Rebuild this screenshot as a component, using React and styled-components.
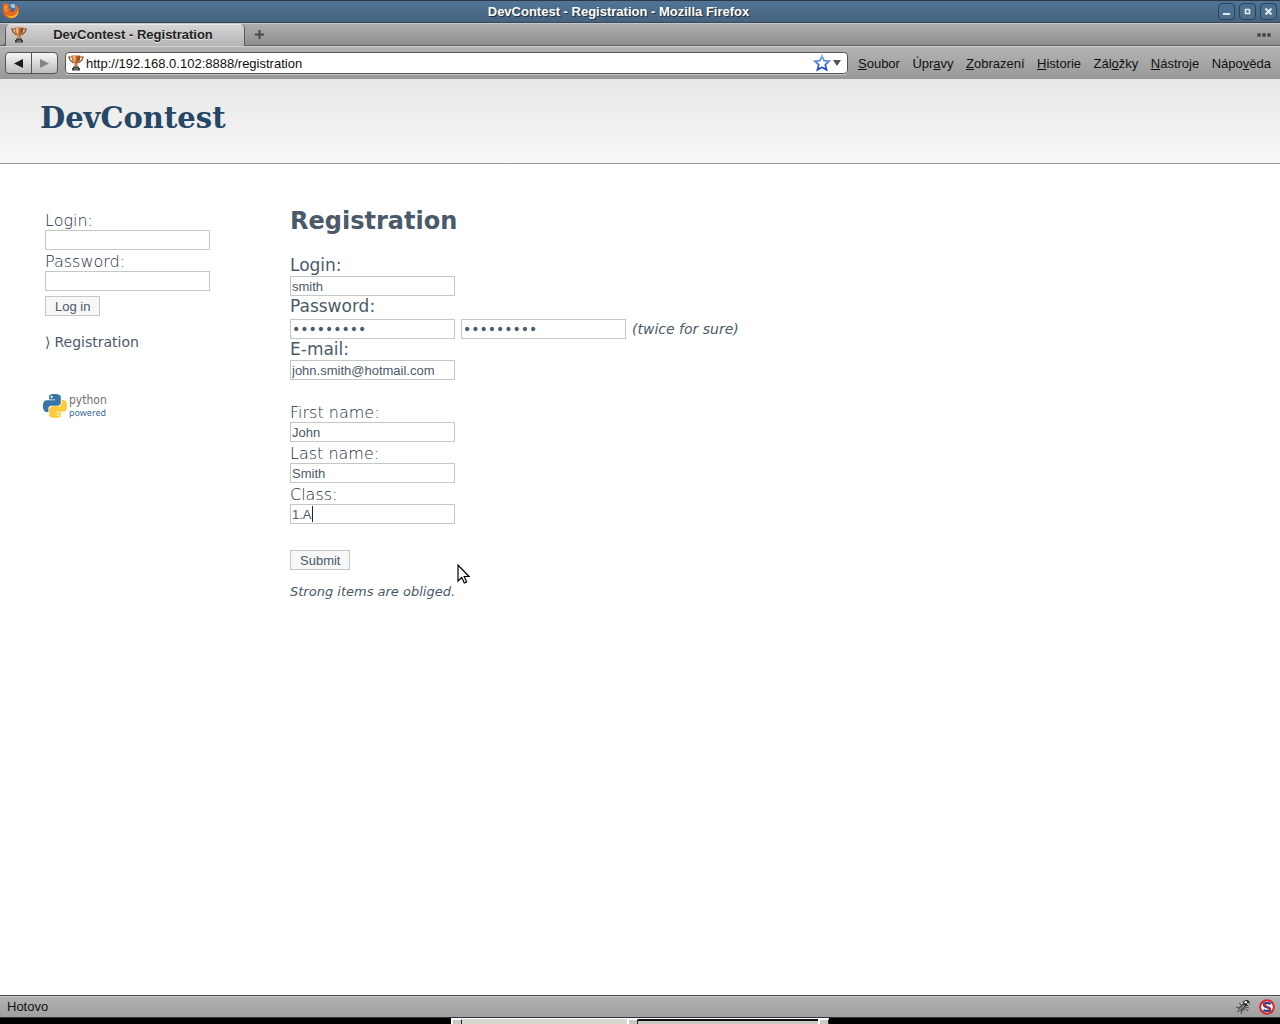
import React from 'react';
import styled, { createGlobalStyle, css } from 'styled-components';

const ui = '"Liberation Sans", Arial, sans-serif';
const body = '"DejaVu Sans", Verdana, sans-serif';
const ink = '#4a5a6a';

const GlobalStyle = createGlobalStyle`
  * { box-sizing: border-box; }
  body { margin: 0; background: #fff; }
  button, input { font: inherit; color: inherit; }
`;

const Window = styled.div`
  display: flex;
  flex-direction: column;
  min-height: 100vh;
  font: 13px/16px ${ui};
  color: #111;
`;

const TitleBar = styled.div`
  display: grid;
  grid-template-columns: 60px 1fr 60px;
  align-items: center;
  height: 23px;
  padding: 0 3px 0 2px;
  border-top: 1px solid #2c3540;
  border-bottom: 1px solid #34495c;
  background: linear-gradient(#4f7597, #46637e);
`;

const WindowTitle = styled.div`
  padding-right: 42px;
  text-align: center;
  font-weight: bold;
  color: #fff;
  text-shadow: 1px 1px 1px #1d2a36;
`;

const WindowButtons = styled.div`
  display: flex;
  justify-content: flex-end;
  gap: 4px;
`;

const WindowButton = styled.button`
  display: grid;
  place-items: center;
  width: 17px;
  height: 17px;
  padding: 0;
  border: 1px solid #2b4259;
  border-radius: 4px;
  background: #4c6f8f;
`;

const TabBar = styled.div`
  display: flex;
  height: 23px;
  border-top: 1px solid #c6c6c6;
  border-bottom: 1px solid #606060;
  background: linear-gradient(#adadad, #8f8f8f);
`;

const TabStub = styled.div`
  width: 5px;
  height: 22px;
  border-bottom: 1px solid #606060;
  border-radius: 0 0 4px 0;
  background: #a2a2a2;
`;

const Tab = styled.div`
  display: flex;
  align-items: center;
  width: 240px;
  height: 22px;
  padding: 0 5px;
  border: solid #5c5c5c;
  border-width: 0 1px;
  border-radius: 5px 5px 0 0;
  background: linear-gradient(#d6d6d6, #b4b4b4);
  box-shadow: inset 0 1px #e6e6e6;
`;

const TabTitle = styled.div`
  flex: 1;
  text-align: center;
  font-weight: bold;
  color: #222;
  text-shadow: 0 1px #e8e8e8;
`;

const PlainButton = styled.button`
  display: grid;
  place-items: center;
  width: 28px;
  padding: 0;
  border: 0;
  background: none;
`;

const Spacer = styled.div`
  flex: 1;
`;

const Toolbar = styled.div`
  display: flex;
  align-items: center;
  height: 33px;
  padding: 0 9px 0 5px;
  border-top: 1px solid #d0d0d0;
  background: linear-gradient(#b4b4b4, #989898);
`;

const HistoryButtons = styled.div`
  display: flex;
  height: 22px;
  margin-right: 7px;
  border: 1px solid #555;
  border-radius: 4px;
  overflow: hidden;
  background: linear-gradient(#f6f6f6, #bcbcbc);
`;

const HistoryButton = styled.button`
  display: grid;
  place-items: center;
  width: ${(p) => (p.$last ? 25 : 26)}px;
  padding: 0;
  border: solid #555;
  border-width: 0 ${(p) => (p.$last ? 0 : 1)}px 0 0;
  background: none;
`;

const AddressBar = styled.form`
  display: flex;
  align-items: center;
  flex: 1;
  height: 22px;
  margin-right: 10px;
  padding: 0 5px 0 2px;
  border: 1px solid #555;
  border-radius: 4px;
  background: #fff;
  box-shadow: 0 1px #c6c6c6;
`;

const AddressInput = styled.input`
  flex: 1;
  min-width: 0;
  height: 18px;
  padding: 0 2px;
  border: 0;
  outline: 0;
  background: none;
`;

const AddressButton = styled.button`
  display: grid;
  place-items: center;
  padding: 0;
  border: 0;
  background: none;
`;

const MenuBar = styled.nav`
  display: flex;
  justify-content: space-between;
  width: 413px;
`;

const MenuItem = styled.button`
  padding: 1px 0 0;
  border: 0;
  background: none;
  color: #111;
`;

const Page = styled.div`
  display: flex;
  flex-direction: column;
  flex: 1;
  background: #fff;
  color: ${ink};
  font: 16px/20px ${body};
`;

const Header = styled.header`
  height: 85px;
  padding: 18px 40px 0;
  border-bottom: 1px solid #999;
  background: linear-gradient(#e8e8e8, #f7f7f7);
`;

const SiteName = styled.a`
  font: bold 29px/42px "DejaVu Serif", Georgia, serif;
  color: #264866;
  text-decoration: none;
`;

const Columns = styled.div`
  display: grid;
  grid-template-columns: 245px 1fr;
  padding: 45px;
`;

const Main = styled.main`
  position: relative;
`;

const Heading = styled.h1`
  margin: -2px 0 20px;
  font-size: 24px;
  line-height: 28px;
`;

const Form = styled.form`
  display: flex;
  flex-direction: column;
  align-items: flex-start;
`;

const FieldGroup = styled.div`
  display: flex;
  flex-direction: column;
  align-items: flex-start;
  margin-bottom: ${(p) => p.$after || 0}px;
`;

const Label = styled.label`
  padding: ${(p) => (p.$strong ? '1px 0 2px' : '3px 0 0')};
  font-size: ${(p) => (p.$strong ? 17 : 16)}px;
  line-height: 18px;
  font-weight: ${(p) => (p.$strong ? 400 : 200)};
  color: ${(p) => (p.$strong ? ink : '#1c2f44')};
`;

const FieldRow = styled.div`
  position: relative;
  display: flex;
  align-items: center;
  gap: 6px;
  padding-top: ${(p) => p.$above || 0}px;
`;

const control = css`
  height: 20px;
  border: 1px solid #c0c8c8;
  border-radius: 0;
  font: 13px/16px ${ui};
  color: ${ink};
`;

const Input = styled.input`
  ${control}
  width: 165px;
  padding: 0 1px;
  outline: 0;
  background: #fff;

  &[type='password'] {
    font: 14px/16px ${body};
  }
`;

const Button = styled.button`
  ${control}
  margin: ${(p) => p.$above || 0}px 0 0;
  padding: 1px 9px 0;
  background: #f7f7f7;
`;

const Caret = styled.span`
  position: absolute;
  left: 22px;
  top: 2px;
  width: 1px;
  height: 16px;
  background: #223;
`;

const Note = styled.em`
  font-size: ${(p) => (p.$inline ? 14 : 13)}px;
`;

const SideLink = styled.a`
  display: flex;
  gap: 4px;
  margin: 16px 0 40px;
  font-size: 14px;
  color: ${ink};
  text-decoration: none;
`;

const Pointer = styled.svg`
  position: absolute;
  left: 167px;
  top: 355px;
`;

const StatusBar = styled.footer`
  display: flex;
  align-items: center;
  gap: 8px;
  height: 22px;
  padding: 0 5px 0 7px;
  border-top: 1px solid #444;
  background: linear-gradient(#b2b2b2, #a0a0a0);
  box-shadow: inset 0 1px #ccc;
`;

const Desktop = styled.div`
  display: flex;
  justify-content: center;
  height: 7px;
  border-top: 1px solid #2c3038;
  background: #000;
`;

const Taskbar = styled.div`
  display: flex;
  width: 378px;
  border-top: 1px solid #fff;
  background: #d8d8d2;
`;

const TaskGrip = styled.div`
  width: 11px;
  border: solid #fff;
  border-width: 1px 0 0 2px;
  border-right: 1px solid #222;
  background: #c8c8c4;
`;

const TaskSlot = styled.div`
  flex: ${(p) => p.$grow};
  border-top: ${(p) => (p.$sunken ? '2px solid #111' : 0)};
  background: ${(p) => (p.$sunken ? '#c6cac2' : 'none')};
`;

const Trophy = () => (
  <svg width="16" height="16" viewBox="0 0 16 16" aria-hidden="true">
    <path d="M4 2H.8L2 5l3.500 3M12 2h3.200L14 5l-3.500 3" fill="none" stroke="#8a4a1c" strokeWidth="1.200" />
    <path d="M3.500.5h9L12 5 9.500 8.500v3h-3v-3L4 5z" fill="#b9652a" />
    <path d="M4.500 1h3.300L7.300 8 5 5z" fill="#f0ae72" />
    <path d="M10.500 1.500H12L11 5 9.500 7z" fill="#7c3f17" />
    <path d="M7.300 8.500h1v3h-1z" fill="#e59a5b" />
    <path d="M5 11.500h6v1.500h1v2.500H4V13h1z" fill="#39423c" />
    <path d="M6 13.500h4v1H6z" fill="#8c948c" />
  </svg>
);

const Firefox = () => (
  <svg width="18" height="20" viewBox="0 1 18 20" aria-hidden="true">
    <circle cx="9.500" cy="8" r="6.500" fill="#2a67b4" />
    <path d="M8 3.500l4-1 2 3-2 2-3-1z" fill="#8cc9ef" />
    <path d="M1 4l1-2.500 2 1.500 2.500-.5L8 4.500 6.500 7l3 1-1.500 2c2 1.500 5 .5 5.500-3L12.500 3c3 1.500 4.500 4 4 7.500C16 15 12.500 17.500 9 17.500 4 17.500 1 13.500 1 9z" fill="#e8681a" />
    <path d="M14 3.500c3 3 2.500 8-1 10.500-3 2-7 1.500-9-1 2 4.500 9 5 11.500.5C17 10.500 16.500 6 14 3.500z" fill="#fbc02b" />
    <path d="M2 6l2.500-2L6 5 4.500 7.500 6 10.500 3.500 10z" fill="#f7a02c" />
  </svg>
);

const Python = () => (
  <svg width="66" height="30" viewBox="2 0 66 30" role="img" aria-label="python powered" overflow="visible">
    <g transform="translate(0 2)">
      <path fill="#3a75a8" d="M14.25.18l.9.2.73.26.59.3.45.32.34.34.25.34.16.33.1.3.04.26.02.2-.01.13V8.5l-.05.63-.13.55-.21.46-.26.38-.3.31-.33.25-.35.19-.35.14-.33.1-.3.07-.26.04-.21.02H8.77l-.69.05-.59.14-.5.22-.41.27-.33.32-.27.35-.2.36-.15.37-.1.35-.07.32-.04.27-.02.21v3.06H3.17l-.21-.03-.28-.07-.32-.12-.35-.18-.36-.26-.36-.36-.35-.46-.32-.59-.28-.73-.21-.88-.14-1.05-.05-1.23.06-1.22.16-1.04.24-.87.32-.71.36-.57.4-.44.42-.33.42-.24.4-.16.36-.1.32-.05.24-.01h.16l.06.01h8.16v-.83H6.18l-.01-2.75-.02-.37.05-.34.11-.31.17-.28.25-.26.31-.23.38-.2.44-.18.51-.15.58-.12.64-.1.71-.06.77-.04.84-.02 1.27.05zm-6.3 1.98l-.23.33-.08.41.08.41.23.34.33.22.41.09.41-.09.33-.22.23-.34.08-.41-.08-.41-.23-.33-.33-.22-.41-.09-.41.09z" />
      <path fill="#ffcb3a" d="M21.04 6.11l.28.06.32.12.35.18.36.27.36.35.35.47.32.59.28.73.21.88.14 1.04.05 1.23-.06 1.23-.16 1.04-.24.86-.32.71-.36.57-.4.45-.42.33-.42.24-.4.16-.36.09-.32.05-.24.02-.16-.01h-8.22v.82h5.84l.01 2.76.02.36-.05.34-.11.31-.17.29-.25.25-.31.24-.38.2-.44.17-.51.15-.58.13-.64.09-.71.07-.77.04-.84.01-1.27-.04-1.07-.14-.9-.2-.73-.25-.59-.3-.45-.33-.34-.34-.25-.34-.16-.33-.1-.3-.04-.25-.02-.2.01-.13v-5.34l.05-.64.13-.54.21-.46.26-.38.3-.32.33-.24.35-.2.35-.14.33-.1.3-.06.26-.04.21-.02.13-.01h5.84l.69-.05.59-.14.5-.21.41-.28.33-.32.27-.35.2-.36.15-.36.1-.35.07-.32.04-.28.02-.21V6.07h2.09l.14.01zm-6.47 14.25l-.23.33-.08.41.08.41.23.33.33.23.41.08.41-.08.33-.23.23-.33.08-.41-.08-.41-.23-.33-.33-.23-.41-.08-.41.08z" />
    </g>
    <text x="26" y="12" fontFamily="DejaVu Sans Condensed, DejaVu Sans, sans-serif" fontSize="12" fill="#707070">python</text>
    <text x="26" y="24" fontFamily="Noto Sans, sans-serif" fontSize="9" fill="#3f6d95">powered</text>
  </svg>
);

const Bug = () => (
  <svg width="16" height="16" viewBox="0 0 16 16" aria-hidden="true">
    <path d="M1 8l3 1M2 13l3-2M6 15l1-4M4 4l3 3M8 2l1 4M9 12l-1-3M14 9l-4-1M13 12l-4-3" stroke="#4c4c4c" fill="none" />
    <ellipse cx="7" cy="8.500" rx="4.500" ry="2.600" transform="rotate(-40 7 8.500)" fill="#555" />
    <path d="M4 11l6-5" stroke="#aaa" />
    <circle cx="11.500" cy="4" r="3" fill="#222" />
    <circle cx="10.700" cy="3.200" r="1.300" fill="#fff" />
    <circle cx="13" cy="5" r="1" fill="#ddd" />
  </svg>
);

const Blocked = () => (
  <svg width="16" height="16" viewBox="0 0 16 16" aria-hidden="true">
    <circle cx="8" cy="8" r="6.800" fill="#fff" stroke="#d8232a" strokeWidth="2" />
    <path d="M11.500 5.200C10 3.500 5 3.500 5 6s6 1.800 6 4.200-5 2.300-6.500.5" fill="none" stroke="#24488c" strokeWidth="2.400" />
    <path d="M3.300 3.300l9.400 9.400" stroke="#d8232a" strokeWidth="1.600" />
  </svg>
);

const menu = [
  ['', 'S', 'oubor'],
  ['Úpr', 'a', 'vy'],
  ['', 'Z', 'obrazení'],
  ['', 'H', 'istorie'],
  ['Zál', 'o', 'žky'],
  ['', 'N', 'ástroje'],
  ['Nápo', 'v', 'ěda'],
];

function Field({ id, label, strong, after, ...rest }) {
  return (
    <FieldGroup $after={after}>
      <Label htmlFor={id} $strong={strong}>{label}</Label>
      <Input id={id} {...rest} />
    </FieldGroup>
  );
}

export default function App() {
  const stop = (e) => e.preventDefault();
  return (
    <Window>
      <GlobalStyle />
      <TitleBar>
        <Firefox />
        <WindowTitle>DevContest - Registration - Mozilla Firefox</WindowTitle>
        <WindowButtons>
          <WindowButton aria-label="Minimize">
            <svg width="9" height="9"><path d="M1 6h7v2H1z" fill="#e4e8ec" /></svg>
          </WindowButton>
          <WindowButton aria-label="Maximize">
            <svg width="9" height="9"><path d="M2.500 2.500h4v4h-4z" fill="none" stroke="#e4e8ec" strokeWidth="1.600" /></svg>
          </WindowButton>
          <WindowButton aria-label="Close">
            <svg width="9" height="9"><path d="M1.500 1.500l6 6M7.500 1.500l-6 6" stroke="#e4e8ec" strokeWidth="2.200" /></svg>
          </WindowButton>
        </WindowButtons>
      </TitleBar>

      <TabBar>
        <TabStub />
        <Tab>
          <Trophy />
          <TabTitle>DevContest - Registration</TabTitle>
        </Tab>
        <PlainButton aria-label="New tab">
          <svg width="9" height="9"><path d="M4.500 0v9M0 4.500h9" stroke="#484848" strokeWidth="2" /></svg>
        </PlainButton>
        <Spacer />
        <PlainButton aria-label="All tabs">
          <svg width="20" height="6" fill="#4a4a4a"><circle cx="3" cy="3" r="2" /><circle cx="8" cy="3" r="2" /><circle cx="13" cy="3" r="2" /></svg>
        </PlainButton>
      </TabBar>

      <Toolbar>
        <HistoryButtons>
          <HistoryButton aria-label="Back">
            <svg width="9" height="9"><path d="M9 0v9L0 4.500z" fill="#1a1a1a" /></svg>
          </HistoryButton>
          <HistoryButton $last aria-label="Forward">
            <svg width="9" height="9"><path d="M0 0v9l9-4.500z" fill="#858585" /></svg>
          </HistoryButton>
        </HistoryButtons>
        <AddressBar onSubmit={stop}>
          <Trophy />
          <AddressInput aria-label="Address" defaultValue="http://192.168.0.102:8888/registration" />
          <AddressButton type="button" aria-label="Bookmark">
            <svg width="18" height="18" viewBox="0 0 18 18">
              <defs><linearGradient id="star" x2="0" y2="1"><stop stopColor="#7fb2ec" /><stop offset="1" stopColor="#1f45c8" /></linearGradient></defs>
              <path d="M9 2l2.100 4.700 5.100.5-3.900 3.400 1.200 5.200L9 13.300l-4.500 2.500 1.200-5.200-3.900-3.400 5.100-.5z" fill="#fff" stroke="url(#star)" strokeWidth="1.800" />
            </svg>
          </AddressButton>
          <AddressButton type="button" aria-label="History">
            <svg width="11" height="6"><path d="M2 0h8L6 6z" fill="#555" /></svg>
          </AddressButton>
        </AddressBar>
        <MenuBar>
          {menu.map(([a, key, b]) => (
            <MenuItem key={b}>{a}<u>{key}</u>{b}</MenuItem>
          ))}
        </MenuBar>
      </Toolbar>

      <Page>
        <Header><SiteName href="#">DevContest</SiteName></Header>
        <Columns>
          <aside>
            <Form onSubmit={stop}>
              <Field id="side-login" label="Login:" />
              <Field id="side-password" label="Password:" type="password" />
              <Button $above={5}>Log in</Button>
            </Form>
            <SideLink href="#"><span>⟩</span>Registration</SideLink>
            <Python />
          </aside>
          <Main>
            <Heading>Registration</Heading>
            <Form onSubmit={stop}>
              <Field id="login" label="Login:" strong defaultValue="smith" />
              <FieldGroup>
                <Label htmlFor="password" $strong>Password:</Label>
                <FieldRow $above={2}>
                  <Input id="password" type="password" defaultValue="password1" />
                  <Input aria-label="Password again" type="password" defaultValue="password1" />
                  <Note $inline>(twice for sure)</Note>
                </FieldRow>
              </FieldGroup>
              <Field id="email" label="E-mail:" strong after={21} defaultValue="john.smith@hotmail.com" />
              <Field id="first" label="First name:" defaultValue="John" />
              <Field id="last" label="Last name:" defaultValue="Smith" />
              <FieldGroup $after={26}>
                <Label htmlFor="class">Class:</Label>
                <FieldRow>
                  <Input id="class" defaultValue="1.A" />
                  <Caret />
                </FieldRow>
              </FieldGroup>
              <FieldGroup $after={12}><Button>Submit</Button></FieldGroup>
              <Note>Strong items are obliged.</Note>
            </Form>
            <Pointer width="14" height="22" viewBox="0 0 14 22">
              <path d="M1 1v16l3.700-3.500 2.600 5.500 2.400-1.100-2.500-5.400H12z" fill="#fff" stroke="#000" strokeWidth="1.200" />
            </Pointer>
          </Main>
        </Columns>
      </Page>

      <StatusBar>
        Hotovo
        <Spacer />
        <Bug />
        <Blocked />
      </StatusBar>
      <Desktop>
        <Taskbar>
          <TaskGrip />
          <TaskSlot $grow={165} />
          <TaskGrip />
          <TaskSlot $grow={179} $sunken />
          <TaskGrip />
        </Taskbar>
      </Desktop>
    </Window>
  );
}
